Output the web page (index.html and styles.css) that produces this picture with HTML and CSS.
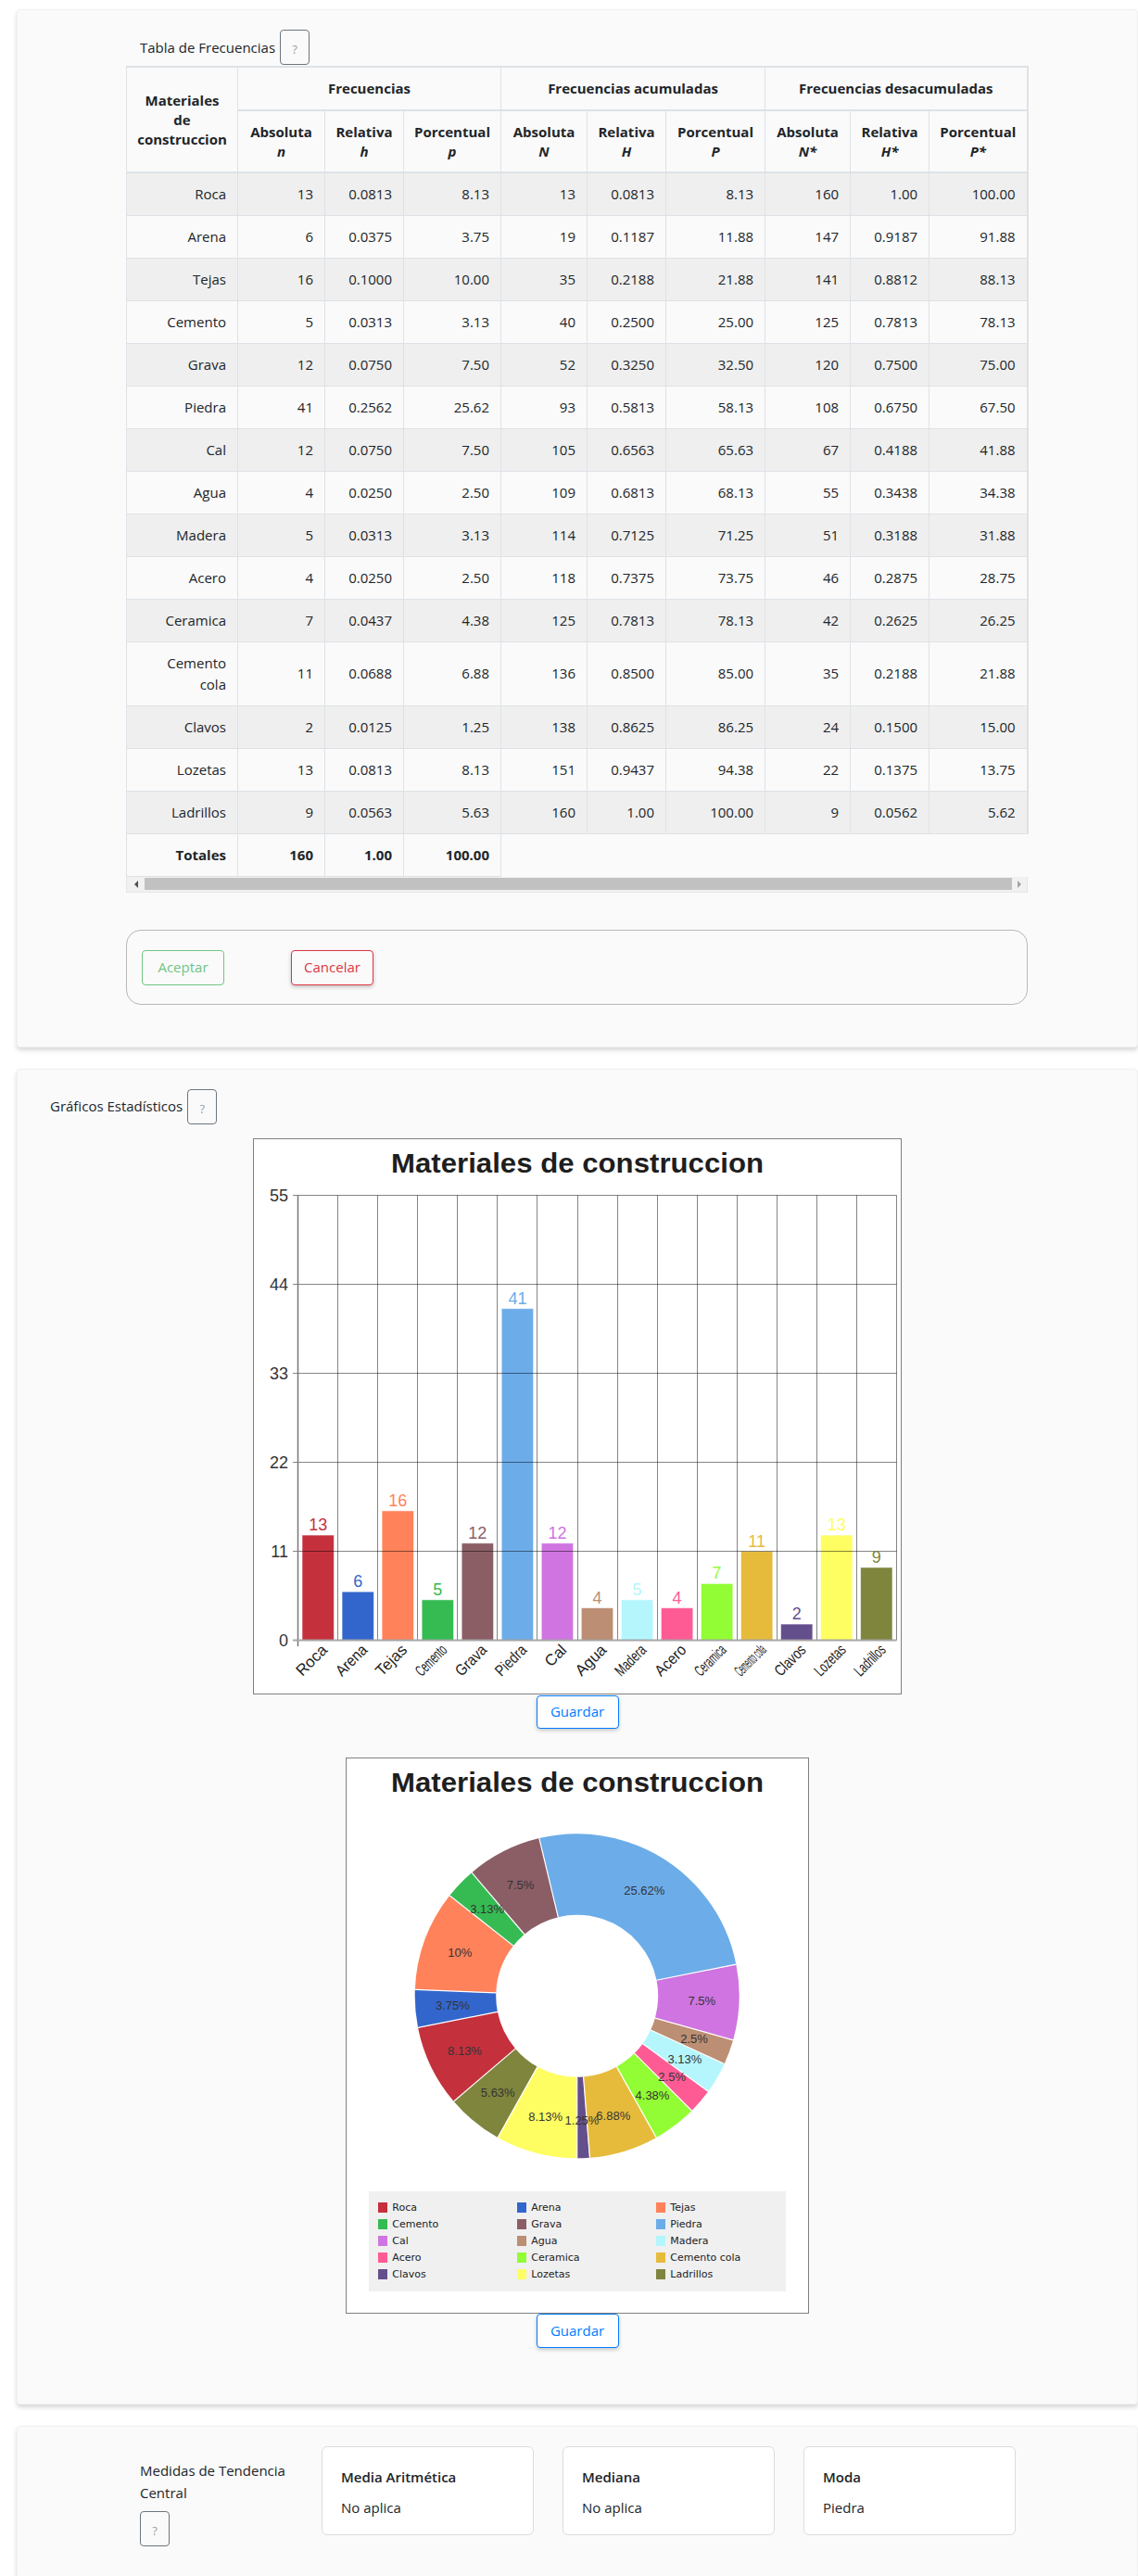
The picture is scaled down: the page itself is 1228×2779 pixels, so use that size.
FILE: index.html
```html
<!DOCTYPE html>
<html lang="es">
<head>
<meta charset="utf-8">
<title>Tabla de Frecuencias</title>
<link rel="stylesheet" href="styles.css">
</head>
<body>
<main class="page">

<section class="card card-table">
  <div class="section-head">
    <span class="section-title">Tabla de Frecuencias</span>
    <button class="help" type="button">?</button>
  </div>
  <div class="table-scroll">
    <table class="freq">
      <colgroup>
        <col class="c1"><col class="c2"><col class="c3"><col class="c4"><col class="c5">
        <col class="c6"><col class="c7"><col class="c8"><col class="c9"><col class="c10">
      </colgroup>
      <thead>
        <tr class="hr1">
          <th rowspan="2">Materiales<br>de<br>construccion</th>
          <th colspan="3">Frecuencias</th>
          <th colspan="3">Frecuencias acumuladas</th>
          <th colspan="3">Frecuencias desacumuladas</th>
        </tr>
        <tr class="hr2">
          <th>Absoluta<br><i>n</i></th>
          <th>Relativa<br><i>h</i></th>
          <th>Porcentual<br><i>p</i></th>
          <th>Absoluta<br><i>N</i></th>
          <th>Relativa<br><i>H</i></th>
          <th>Porcentual<br><i>P</i></th>
          <th>Absoluta<br><i>N*</i></th>
          <th>Relativa<br><i>H*</i></th>
          <th>Porcentual<br><i>P*</i></th>
        </tr>
      </thead>
      <tbody>
        <tr><td>Roca</td><td>13</td><td>0.0813</td><td>8.13</td><td>13</td><td>0.0813</td><td>8.13</td><td>160</td><td>1.00</td><td>100.00</td></tr>
        <tr><td>Arena</td><td>6</td><td>0.0375</td><td>3.75</td><td>19</td><td>0.1187</td><td>11.88</td><td>147</td><td>0.9187</td><td>91.88</td></tr>
        <tr><td>Tejas</td><td>16</td><td>0.1000</td><td>10.00</td><td>35</td><td>0.2188</td><td>21.88</td><td>141</td><td>0.8812</td><td>88.13</td></tr>
        <tr><td>Cemento</td><td>5</td><td>0.0313</td><td>3.13</td><td>40</td><td>0.2500</td><td>25.00</td><td>125</td><td>0.7813</td><td>78.13</td></tr>
        <tr><td>Grava</td><td>12</td><td>0.0750</td><td>7.50</td><td>52</td><td>0.3250</td><td>32.50</td><td>120</td><td>0.7500</td><td>75.00</td></tr>
        <tr><td>Piedra</td><td>41</td><td>0.2562</td><td>25.62</td><td>93</td><td>0.5813</td><td>58.13</td><td>108</td><td>0.6750</td><td>67.50</td></tr>
        <tr><td>Cal</td><td>12</td><td>0.0750</td><td>7.50</td><td>105</td><td>0.6563</td><td>65.63</td><td>67</td><td>0.4188</td><td>41.88</td></tr>
        <tr><td>Agua</td><td>4</td><td>0.0250</td><td>2.50</td><td>109</td><td>0.6813</td><td>68.13</td><td>55</td><td>0.3438</td><td>34.38</td></tr>
        <tr><td>Madera</td><td>5</td><td>0.0313</td><td>3.13</td><td>114</td><td>0.7125</td><td>71.25</td><td>51</td><td>0.3188</td><td>31.88</td></tr>
        <tr><td>Acero</td><td>4</td><td>0.0250</td><td>2.50</td><td>118</td><td>0.7375</td><td>73.75</td><td>46</td><td>0.2875</td><td>28.75</td></tr>
        <tr><td>Ceramica</td><td>7</td><td>0.0437</td><td>4.38</td><td>125</td><td>0.7813</td><td>78.13</td><td>42</td><td>0.2625</td><td>26.25</td></tr>
        <tr class="tall"><td>Cemento<br>cola</td><td>11</td><td>0.0688</td><td>6.88</td><td>136</td><td>0.8500</td><td>85.00</td><td>35</td><td>0.2188</td><td>21.88</td></tr>
        <tr><td>Clavos</td><td>2</td><td>0.0125</td><td>1.25</td><td>138</td><td>0.8625</td><td>86.25</td><td>24</td><td>0.1500</td><td>15.00</td></tr>
        <tr><td>Lozetas</td><td>13</td><td>0.0813</td><td>8.13</td><td>151</td><td>0.9437</td><td>94.38</td><td>22</td><td>0.1375</td><td>13.75</td></tr>
        <tr><td>Ladrillos</td><td>9</td><td>0.0563</td><td>5.63</td><td>160</td><td>1.00</td><td>100.00</td><td>9</td><td>0.0562</td><td>5.62</td></tr>
        <tr class="totals"><td>Totales</td><td>160</td><td>1.00</td><td>100.00</td></tr>
      </tbody>
    </table>
    <div class="scrollbar">
      <span class="sb-btn sb-left"><i></i></span>
      <span class="sb-thumb"></span>
      <span class="sb-btn sb-right"><i></i></span>
    </div>
  </div>
  <div class="actions">
    <button class="btn btn-accept" type="button" disabled>Aceptar</button>
    <button class="btn btn-cancel" type="button">Cancelar</button>
  </div>
</section>

<section class="card card-charts">
  <div class="section-head head-charts">
    <span class="section-title">Gráficos Estadísticos</span>
    <button class="help" type="button">?</button>
  </div>
  <div class="charts">
    <div class="chart-box bar-box">
      <svg class="chart-svg" width="698" height="598" viewBox="0 0 698 598">
        <rect class="chart-bg" x="0" y="0" width="698" height="598"/>
        <text class="ct-title" x="349" y="36" text-anchor="middle" textLength="402" lengthAdjust="spacingAndGlyphs">Materiales de construccion</text>

        <g class="bars">
          <rect x="52.02" y="427.05" width="34.4" height="113.45" fill="#c5303d"/>
          <rect x="95.06" y="488.14" width="34.4" height="52.36" fill="#3366cc"/>
          <rect x="138.1" y="400.86" width="34.4" height="139.64" fill="#ff825a"/>
          <rect x="181.14" y="496.86" width="34.4" height="43.64" fill="#35bb52"/>
          <rect x="224.18" y="435.77" width="34.4" height="104.73" fill="#8b5e66"/>
          <rect x="267.22" y="182.68" width="34.4" height="357.82" fill="#6cace9"/>
          <rect x="310.26" y="435.77" width="34.4" height="104.73" fill="#cf74e0"/>
          <rect x="353.3" y="505.59" width="34.4" height="34.91" fill="#bc8e73"/>
          <rect x="396.34" y="496.86" width="34.4" height="43.64" fill="#b4f6fc"/>
          <rect x="439.38" y="505.59" width="34.4" height="34.91" fill="#fe5b94"/>
          <rect x="482.42" y="479.41" width="34.4" height="61.09" fill="#92fd34"/>
          <rect x="525.46" y="444.5" width="34.4" height="96" fill="#e6bb3c"/>
          <rect x="568.5" y="523.05" width="34.4" height="17.45" fill="#634f8c"/>
          <rect x="611.54" y="427.05" width="34.4" height="113.45" fill="#fefe62"/>
          <rect x="654.58" y="461.95" width="34.4" height="78.55" fill="#7f853d"/>
        </g>

        <g class="grid">
          <line x1="42" y1="60.5" x2="693.5" y2="60.5"/>
          <line x1="42" y1="156.5" x2="693.5" y2="156.5"/>
          <line x1="42" y1="252.5" x2="693.5" y2="252.5"/>
          <line x1="42" y1="348.5" x2="693.5" y2="348.5"/>
          <line x1="42" y1="444.5" x2="693.5" y2="444.5"/>
          <line x1="90.5" y1="60.5" x2="90.5" y2="540.5"/>
          <line x1="133.5" y1="60.5" x2="133.5" y2="540.5"/>
          <line x1="176.5" y1="60.5" x2="176.5" y2="540.5"/>
          <line x1="219.5" y1="60.5" x2="219.5" y2="540.5"/>
          <line x1="262.5" y1="60.5" x2="262.5" y2="540.5"/>
          <line x1="305.5" y1="60.5" x2="305.5" y2="540.5"/>
          <line x1="349.5" y1="60.5" x2="349.5" y2="540.5"/>
          <line x1="392.5" y1="60.5" x2="392.5" y2="540.5"/>
          <line x1="435.5" y1="60.5" x2="435.5" y2="540.5"/>
          <line x1="478.5" y1="60.5" x2="478.5" y2="540.5"/>
          <line x1="521.5" y1="60.5" x2="521.5" y2="540.5"/>
          <line x1="564.5" y1="60.5" x2="564.5" y2="540.5"/>
          <line x1="607.5" y1="60.5" x2="607.5" y2="540.5"/>
          <line x1="650.5" y1="60.5" x2="650.5" y2="540.5"/>
          <line x1="693.5" y1="60.5" x2="693.5" y2="540.5"/>
        </g>
        <line class="axis-y" x1="47.5" y1="60.5" x2="47.5" y2="547"/>
        <line class="axis-x" x1="42" y1="540.5" x2="693.5" y2="540.5"/>

        <g class="y-labels">
          <text x="37" y="67">55</text>
          <text x="37" y="163">44</text>
          <text x="37" y="259">33</text>
          <text x="37" y="355">22</text>
          <text x="37" y="451">11</text>
          <text x="37" y="547">0</text>
        </g>

        <g class="v-labels">
          <text x="69.22" y="422" fill="#c5303d">13</text>
          <text x="112.26" y="483" fill="#3366cc">6</text>
          <text x="155.3" y="396" fill="#ff825a">16</text>
          <text x="198.34" y="492" fill="#35bb52">5</text>
          <text x="241.38" y="431" fill="#8b5e66">12</text>
          <text x="284.42" y="178" fill="#6cace9">41</text>
          <text x="327.46" y="431" fill="#cf74e0">12</text>
          <text x="370.5" y="501" fill="#bc8e73">4</text>
          <text x="413.54" y="492" fill="#b4f6fc">5</text>
          <text x="456.58" y="501" fill="#fe5b94">4</text>
          <text x="499.62" y="474" fill="#92fd34">7</text>
          <text x="542.66" y="440" fill="#e6bb3c">11</text>
          <text x="585.7" y="518" fill="#634f8c">2</text>
          <text x="628.74" y="422" fill="#fefe62">13</text>
          <text x="671.78" y="457" fill="#7f853d">9</text>
        </g>

        <g class="x-labels">
          <text x="80.2" y="552" transform="rotate(-45 80.2 552)">Roca</text>
          <text x="123.3" y="552" transform="rotate(-45 123.3 552)" textLength="40" lengthAdjust="spacingAndGlyphs">Arena</text>
          <text x="166.3" y="552" transform="rotate(-45 166.3 552)" textLength="40" lengthAdjust="spacingAndGlyphs">Tejas</text>
          <text x="209.3" y="552" transform="rotate(-45 209.3 552)" textLength="40" lengthAdjust="spacingAndGlyphs">Cemento</text>
          <text x="252.4" y="552" transform="rotate(-45 252.4 552)" textLength="40" lengthAdjust="spacingAndGlyphs">Grava</text>
          <text x="295.4" y="552" transform="rotate(-45 295.4 552)" textLength="40" lengthAdjust="spacingAndGlyphs">Piedra</text>
          <text x="338.5" y="552" transform="rotate(-45 338.5 552)">Cal</text>
          <text x="381.5" y="552" transform="rotate(-45 381.5 552)">Agua</text>
          <text x="424.5" y="552" transform="rotate(-45 424.5 552)" textLength="40" lengthAdjust="spacingAndGlyphs">Madera</text>
          <text x="467.6" y="552" transform="rotate(-45 467.6 552)" textLength="40" lengthAdjust="spacingAndGlyphs">Acero</text>
          <text x="510.6" y="552" transform="rotate(-45 510.6 552)" textLength="40" lengthAdjust="spacingAndGlyphs">Ceramica</text>
          <text x="553.7" y="552" transform="rotate(-45 553.7 552)" textLength="40" lengthAdjust="spacingAndGlyphs">Cemento cola</text>
          <text x="596.7" y="552" transform="rotate(-45 596.7 552)" textLength="40" lengthAdjust="spacingAndGlyphs">Clavos</text>
          <text x="639.7" y="552" transform="rotate(-45 639.7 552)" textLength="40" lengthAdjust="spacingAndGlyphs">Lozetas</text>
          <text x="682.8" y="552" transform="rotate(-45 682.8 552)" textLength="40" lengthAdjust="spacingAndGlyphs">Ladrillos</text>
        </g>
      </svg>
    </div>
    <button class="btn btn-save btn-save-first" type="button">Guardar</button>

    <div class="chart-box pie-box">
      <svg class="chart-svg" width="498" height="598" viewBox="0 0 498 598">
        <rect class="chart-bg" x="0" y="0" width="498" height="598"/>
        <text class="ct-title" x="249" y="36" text-anchor="middle" textLength="402" lengthAdjust="spacingAndGlyphs">Materiales de construccion</text>
        <g class="donut" transform="rotate(139.5 248.7 256.3)">
          <circle cx="248.7" cy="256.3" r="131.25" stroke="#c5303d" stroke-dasharray="67.004 824.668" stroke-dashoffset="0"/>
          <circle cx="248.7" cy="256.3" r="131.25" stroke="#3366cc" stroke-dasharray="30.925 824.668" stroke-dashoffset="-67.004"/>
          <circle cx="248.7" cy="256.3" r="131.25" stroke="#ff825a" stroke-dasharray="82.467 824.668" stroke-dashoffset="-97.929"/>
          <circle cx="248.7" cy="256.3" r="131.25" stroke="#35bb52" stroke-dasharray="25.771 824.668" stroke-dashoffset="-180.396"/>
          <circle cx="248.7" cy="256.3" r="131.25" stroke="#8b5e66" stroke-dasharray="61.850 824.668" stroke-dashoffset="-206.167"/>
          <circle cx="248.7" cy="256.3" r="131.25" stroke="#6cace9" stroke-dasharray="211.321 824.668" stroke-dashoffset="-268.017"/>
          <circle cx="248.7" cy="256.3" r="131.25" stroke="#cf74e0" stroke-dasharray="61.850 824.668" stroke-dashoffset="-479.339"/>
          <circle cx="248.7" cy="256.3" r="131.25" stroke="#bc8e73" stroke-dasharray="20.617 824.668" stroke-dashoffset="-541.189"/>
          <circle cx="248.7" cy="256.3" r="131.25" stroke="#b4f6fc" stroke-dasharray="25.771 824.668" stroke-dashoffset="-561.806"/>
          <circle cx="248.7" cy="256.3" r="131.25" stroke="#fe5b94" stroke-dasharray="20.617 824.668" stroke-dashoffset="-587.577"/>
          <circle cx="248.7" cy="256.3" r="131.25" stroke="#92fd34" stroke-dasharray="36.079 824.668" stroke-dashoffset="-608.193"/>
          <circle cx="248.7" cy="256.3" r="131.25" stroke="#e6bb3c" stroke-dasharray="56.696 824.668" stroke-dashoffset="-644.273"/>
          <circle cx="248.7" cy="256.3" r="131.25" stroke="#634f8c" stroke-dasharray="10.308 824.668" stroke-dashoffset="-700.968"/>
          <circle cx="248.7" cy="256.3" r="131.25" stroke="#fefe62" stroke-dasharray="67.004 824.668" stroke-dashoffset="-711.277"/>
          <circle cx="248.7" cy="256.3" r="131.25" stroke="#7f853d" stroke-dasharray="46.388 824.668" stroke-dashoffset="-778.281"/>
          <g class="seps">
            <line x1="336.2" y1="256.3" x2="423.7" y2="256.3"/>
            <line x1="336.2" y1="256.3" x2="423.7" y2="256.3" transform="rotate(29.25 248.7 256.3)"/>
            <line x1="336.2" y1="256.3" x2="423.7" y2="256.3" transform="rotate(42.75 248.7 256.3)"/>
            <line x1="336.2" y1="256.3" x2="423.7" y2="256.3" transform="rotate(78.75 248.7 256.3)"/>
            <line x1="336.2" y1="256.3" x2="423.7" y2="256.3" transform="rotate(90 248.7 256.3)"/>
            <line x1="336.2" y1="256.3" x2="423.7" y2="256.3" transform="rotate(117 248.7 256.3)"/>
            <line x1="336.2" y1="256.3" x2="423.7" y2="256.3" transform="rotate(209.25 248.7 256.3)"/>
            <line x1="336.2" y1="256.3" x2="423.7" y2="256.3" transform="rotate(236.25 248.7 256.3)"/>
            <line x1="336.2" y1="256.3" x2="423.7" y2="256.3" transform="rotate(245.25 248.7 256.3)"/>
            <line x1="336.2" y1="256.3" x2="423.7" y2="256.3" transform="rotate(256.5 248.7 256.3)"/>
            <line x1="336.2" y1="256.3" x2="423.7" y2="256.3" transform="rotate(265.5 248.7 256.3)"/>
            <line x1="336.2" y1="256.3" x2="423.7" y2="256.3" transform="rotate(281.25 248.7 256.3)"/>
            <line x1="336.2" y1="256.3" x2="423.7" y2="256.3" transform="rotate(306 248.7 256.3)"/>
            <line x1="336.2" y1="256.3" x2="423.7" y2="256.3" transform="rotate(310.5 248.7 256.3)"/>
            <line x1="336.2" y1="256.3" x2="423.7" y2="256.3" transform="rotate(339.75 248.7 256.3)"/>
          </g>
        </g>
        <g class="p-labels">
          <text x="383.4" y="256.3" transform="rotate(154.125 248.7 256.3) rotate(-154.125 383.4 256.3)">8.13%</text>
          <text x="383.4" y="256.3" transform="rotate(175.5 248.7 256.3) rotate(-175.5 383.4 256.3)">3.75%</text>
          <text x="383.4" y="256.3" transform="rotate(200.25 248.7 256.3) rotate(-200.25 383.4 256.3)">10%</text>
          <text x="383.4" y="256.3" transform="rotate(223.875 248.7 256.3) rotate(-223.875 383.4 256.3)">3.13%</text>
          <text x="383.4" y="256.3" transform="rotate(243 248.7 256.3) rotate(-243 383.4 256.3)">7.5%</text>
          <text x="383.4" y="256.3" transform="rotate(302.625 248.7 256.3) rotate(-302.625 383.4 256.3)">25.62%</text>
          <text x="383.4" y="256.3" transform="rotate(2.25 248.7 256.3) rotate(-2.25 383.4 256.3)">7.5%</text>
          <text x="383.4" y="256.3" transform="rotate(20.25 248.7 256.3) rotate(-20.25 383.4 256.3)">2.5%</text>
          <text x="383.4" y="256.3" transform="rotate(30.375 248.7 256.3) rotate(-30.375 383.4 256.3)">3.13%</text>
          <text x="383.4" y="256.3" transform="rotate(40.5 248.7 256.3) rotate(-40.5 383.4 256.3)">2.5%</text>
          <text x="383.4" y="256.3" transform="rotate(52.875 248.7 256.3) rotate(-52.875 383.4 256.3)">4.38%</text>
          <text x="383.4" y="256.3" transform="rotate(73.125 248.7 256.3) rotate(-73.125 383.4 256.3)">6.88%</text>
          <text x="383.4" y="256.3" transform="rotate(87.75 248.7 256.3) rotate(-87.75 383.4 256.3)">1.25%</text>
          <text x="383.4" y="256.3" transform="rotate(104.625 248.7 256.3) rotate(-104.625 383.4 256.3)">8.13%</text>
          <text x="383.4" y="256.3" transform="rotate(129.375 248.7 256.3) rotate(-129.375 383.4 256.3)">5.63%</text>
        </g>
        <g class="legend">
          <rect class="legend-bg" x="24" y="467" width="450" height="108"/>
          <rect x="34" y="479" width="10" height="11" fill="#c5303d"/><text x="49.3" y="487.7">Roca</text>
          <rect x="184" y="479" width="10" height="11" fill="#3366cc"/><text x="199.3" y="487.7">Arena</text>
          <rect x="334" y="479" width="10" height="11" fill="#ff825a"/><text x="349.3" y="487.7">Tejas</text>
          <rect x="34" y="497" width="10" height="11" fill="#35bb52"/><text x="49.3" y="505.7">Cemento</text>
          <rect x="184" y="497" width="10" height="11" fill="#8b5e66"/><text x="199.3" y="505.7">Grava</text>
          <rect x="334" y="497" width="10" height="11" fill="#6cace9"/><text x="349.3" y="505.7">Piedra</text>
          <rect x="34" y="515" width="10" height="11" fill="#cf74e0"/><text x="49.3" y="523.7">Cal</text>
          <rect x="184" y="515" width="10" height="11" fill="#bc8e73"/><text x="199.3" y="523.7">Agua</text>
          <rect x="334" y="515" width="10" height="11" fill="#b4f6fc"/><text x="349.3" y="523.7">Madera</text>
          <rect x="34" y="533" width="10" height="11" fill="#fe5b94"/><text x="49.3" y="541.7">Acero</text>
          <rect x="184" y="533" width="10" height="11" fill="#92fd34"/><text x="199.3" y="541.7">Ceramica</text>
          <rect x="334" y="533" width="10" height="11" fill="#e6bb3c"/><text x="349.3" y="541.7">Cemento cola</text>
          <rect x="34" y="551" width="10" height="11" fill="#634f8c"/><text x="49.3" y="559.7">Clavos</text>
          <rect x="184" y="551" width="10" height="11" fill="#fefe62"/><text x="199.3" y="559.7">Lozetas</text>
          <rect x="334" y="551" width="10" height="11" fill="#7f853d"/><text x="349.3" y="559.7">Ladrillos</text>
        </g>
      </svg>
    </div>
    <button class="btn btn-save" type="button">Guardar</button>
  </div>
</section>

<section class="card card-measures">
  <div class="measures-title">
    <p>Medidas de Tendencia Central</p>
    <button class="help help-block" type="button">?</button>
  </div>
  <div class="measure">
    <h3>Media Aritmética</h3>
    <p>No aplica</p>
  </div>
  <div class="measure">
    <h3>Mediana</h3>
    <p>No aplica</p>
  </div>
  <div class="measure">
    <h3>Moda</h3>
    <p>Piedra</p>
  </div>
</section>

</main>
</body>
</html>
```

FILE: styles.css
```css
* { box-sizing: border-box; }

html, body {
  margin: 0;
  padding: 0;
  background: #ffffff;
}

body {
  font-family: "Open Sans", "Noto Sans", sans-serif;
  font-size: 15px;
  line-height: 1.5;
  color: #212529;
}

.page {
  padding-top: 10px;
}

/* ---------- cards ---------- */
.card {
  margin-left: 18px;
  width: 1210px;
  background: #fafafa;
  border: 1px solid #f1f1f1;
  border-radius: 4px;
  box-shadow: 0 3px 5px rgba(0, 0, 0, 0.16);
}

.card + .card {
  margin-top: 23px;
}

.section-head {
  display: flex;
  align-items: center;
  gap: 5px;
  height: 38px;
}

.section-title {
  font-size: 15px;
  color: #212529;
}

.help {
  width: 32px;
  height: 38px;
  padding: 4px 0 0;
  border: 1px solid #6c757d;
  border-radius: 4px;
  background: transparent;
  color: #9aa0a6;
  font-family: "Open Sans", sans-serif;
  font-size: 13px;
}

/* ---------- card 1 : table ---------- */
.card-table {
  padding: 21px 0 45px 117px;
}

.card-table .section-head {
  padding-left: 15px;
}

.table-scroll {
  margin-top: 1px;
  width: 973px;
}

.freq {
  border-collapse: collapse;
  table-layout: fixed;
  width: 972px;
}

.freq .c1 { width: 120px; }
.freq .c2 { width: 94px; }
.freq .c3 { width: 85px; }
.freq .c4 { width: 105px; }
.freq .c5 { width: 93px; }
.freq .c6 { width: 85px; }
.freq .c7 { width: 107px; }
.freq .c8 { width: 92px; }
.freq .c9 { width: 85px; }
.freq .c10 { width: 106px; }

.freq th {
  font-weight: 700;
  text-align: center;
  vertical-align: middle;
  padding: 0 6px;
  line-height: 21px;
  border: 1px solid #dee2e6;
  border-bottom: 2px solid #dee2e6;
  color: #212529;
}

.freq th i {
  font-style: italic;
}

.freq .hr1 { height: 47px; }
.freq .hr2 { height: 67px; }

.freq .hr1 th {
  border-top: 2px solid #dee2e6;
}

.freq .hr1 th:last-child,
.freq .hr2 th:last-child,
.freq td:nth-child(10) {
  border-right: 2px solid #dee2e6;
}

.freq tbody tr { height: 46px; }
.freq tbody tr.tall { height: 69px; }

.freq td {
  text-align: right;
  vertical-align: middle;
  padding: 0 12px;
  line-height: 23px;
  border: 1px solid #dee2e6;
  color: #212529;
}

.freq tbody tr:nth-child(odd) td {
  background: #efefef;
}

.freq .totals td {
  font-weight: 700;
}

/* fake horizontal scrollbar */
.scrollbar {
  display: flex;
  align-items: center;
  width: 973px;
  height: 17px;
  background: #f1f1f1;
  border: 1px solid #e6e6e6;
  border-top: 0;
}

.sb-btn {
  display: flex;
  align-items: center;
  justify-content: center;
  height: 100%;
}

.sb-left { width: 19px; }
.sb-right { width: 16px; }

.sb-btn i {
  display: block;
  width: 0;
  height: 0;
  border-style: solid;
}

.sb-left i {
  border-width: 4px 4px 4px 0;
  border-color: transparent #505050 transparent transparent;
}

.sb-right i {
  border-width: 4px 0 4px 4px;
  border-color: transparent transparent transparent #a3a3a3;
}

.sb-thumb {
  flex: 1;
  height: 13px;
  background: #c1c1c1;
}

/* action box */
.actions {
  display: flex;
  gap: 72px;
  margin-top: 40px;
  width: 973px;
  height: 81px;
  padding: 21px 0 0 16px;
  border: 1px solid #b8b8b8;
  border-radius: 16px;
}

.btn {
  width: 89px;
  height: 38px;
  padding: 0;
  border: 1px solid;
  border-radius: 4px;
  background: transparent;
  font-family: "Open Sans", sans-serif;
  font-size: 15px;
  line-height: 1;
}

.btn-accept {
  color: #71c484;
  border-color: #71c484;
}

.btn-cancel {
  color: #dc3545;
  border-color: #dc3545;
  background: #fafafa;
  box-shadow: 0 2px 4px rgba(0, 0, 0, 0.22);
}

/* ---------- card 2 : charts ---------- */
.card-charts {
  padding: 21px 0 60px 0;
}

.head-charts {
  padding-left: 35px;
  margin-bottom: 15px;
}

.charts {
  display: flex;
  flex-direction: column;
  align-items: center;
}

.chart-box {
  background: #ffffff;
  border: 1px solid #808080;
}

.bar-box {
  width: 700px;
  height: 600px;
}

.pie-box {
  width: 500px;
  height: 600px;
  margin-top: 31px;
}

.chart-svg {
  display: block;
}

.chart-bg { fill: #ffffff; }

.ct-title {
  font-family: "Liberation Sans", Arial, sans-serif;
  font-weight: 700;
  font-size: 30px;
  fill: #1e1e1e;
}

.bars rect {
  stroke: #ffffff;
  stroke-opacity: 0.55;
  stroke-width: 1;
}

.grid line {
  stroke: rgba(0, 0, 0, 0.48);
  stroke-width: 1;
}

.axis-y {
  stroke: #777777;
  stroke-width: 1.5;
}

.axis-x {
  stroke: #a6a6a6;
  stroke-width: 2;
}

.y-labels text {
  font-family: "Liberation Sans", Arial, sans-serif;
  font-size: 18px;
  fill: #333333;
  text-anchor: end;
}

.v-labels text {
  font-family: "Liberation Sans", Arial, sans-serif;
  font-size: 18px;
  text-anchor: middle;
}

.x-labels text {
  font-family: "Liberation Sans", Arial, sans-serif;
  font-size: 17px;
  fill: #222222;
  text-anchor: end;
}

.btn-save {
  height: 37px;
  color: #007bff;
  border-color: #007bff;
  background: #ffffff;
  font-weight: 500;
  box-shadow: 0 2px 4px rgba(0, 0, 0, 0.2);
}

.btn-save-first {
  height: 36px;
  margin-top: 1px;
}

.donut circle {
  fill: none;
  stroke-width: 87.5;
}

.seps line {
  stroke: #ffffff;
  stroke-width: 1.2;
}

.p-labels text {
  font-family: "Liberation Sans", Arial, sans-serif;
  font-size: 13px;
  fill: #333333;
  text-anchor: middle;
  dominant-baseline: central;
}

.legend-bg { fill: #f0f0f0; }

.legend text {
  font-family: "DejaVu Sans", Verdana, sans-serif;
  font-size: 11px;
  fill: #222222;
}

/* ---------- card 3 : measures ---------- */
.card-measures {
  display: flex;
  height: 164px;
  padding: 21px 0 0 132px;
}

.measures-title {
  width: 196px;
  padding-top: 14px;
}

.measures-title p {
  margin: 0;
  width: 175px;
  line-height: 24px;
}

.help-block {
  display: block;
  margin-top: 8px;
}

.measure {
  width: 229px;
  height: 96px;
  margin-right: 31px;
  padding: 20px;
  background: #ffffff;
  border: 1px solid #dcdcdc;
  border-radius: 6px;
}

.measure h3 {
  margin: 0 0 9px;
  font-size: 15px;
  font-weight: 600;
  line-height: 24px;
}

.measure p {
  margin: 0;
  line-height: 24px;
}
```
